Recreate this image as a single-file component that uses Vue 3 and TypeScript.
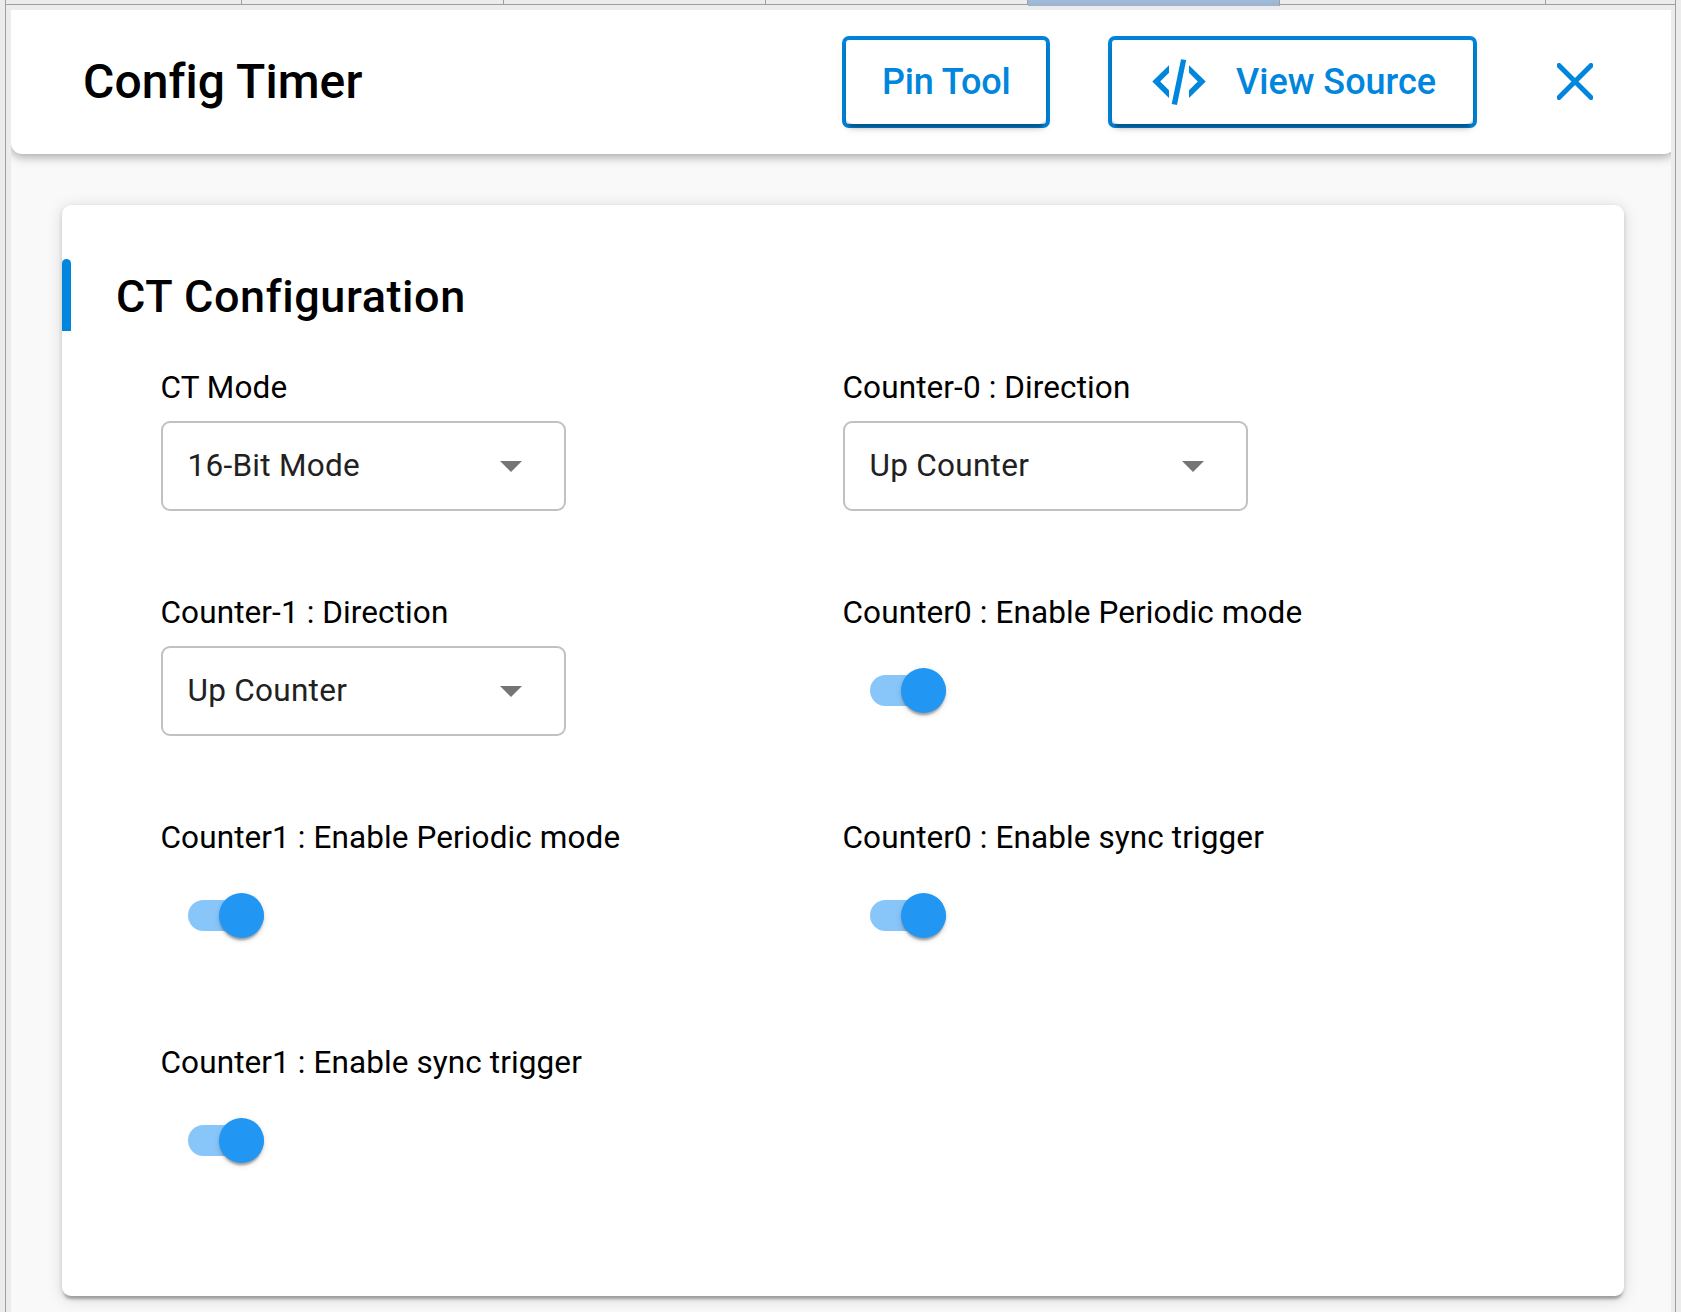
<script setup lang="ts">
import { reactive } from 'vue'

interface SelectField {
  kind: 'select'
  label: string
  value: string
}

interface ToggleField {
  kind: 'toggle'
  label: string
  value: boolean
}

type Field = SelectField | ToggleField

const fields = reactive<Field[]>([
  { kind: 'select', label: 'CT Mode', value: '16-Bit Mode' },
  { kind: 'select', label: 'Counter-0 : Direction', value: 'Up Counter' },
  { kind: 'select', label: 'Counter-1 : Direction', value: 'Up Counter' },
  { kind: 'toggle', label: 'Counter0 : Enable Periodic mode', value: true },
  { kind: 'toggle', label: 'Counter1 : Enable Periodic mode', value: true },
  { kind: 'toggle', label: 'Counter0 : Enable sync trigger', value: true },
  { kind: 'toggle', label: 'Counter1 : Enable sync trigger', value: true },
])
</script>

<template>
  <div class="window">
    <div class="tabs">
      <span class="tab first"></span>
      <span class="tab"></span>
      <span class="tab"></span>
      <span class="tab"></span>
      <span class="tab active"></span>
      <span class="tab wide"></span>
      <span class="tab last"></span>
    </div>
    <div class="frame">
      <div class="panel">
        <header class="header">
          <h1 class="title">Config Timer</h1>
          <div class="outline pin">
            <button class="btn" type="button">Pin Tool</button>
          </div>
          <div class="outline source">
            <button class="btn" type="button">
              <svg class="code" viewBox="0 0 54 46" width="54" height="46" aria-hidden="true">
                <path d="M17 6.2V13.8L8.2 22.5L17 31.2V39L0.3 22.5Z" />
                <path d="M29 0.2L34.2 1.1L25 46L19.7 45.1Z" />
                <path d="M37 6.2V13.8L45.8 22.5L37 31.2V39L53.7 22.5Z" />
              </svg>
              <span>View Source</span>
            </button>
          </div>
          <button class="close" type="button" aria-label="Close">
            <svg viewBox="0 0 36 37" width="36" height="37">
              <path d="M2 2.5L34 34.5M34 2.5L2 34.5" />
            </svg>
          </button>
        </header>

        <section class="card">
          <h2 class="heading">CT Configuration</h2>
          <div class="grid">
            <div v-for="f in fields" :key="f.label" class="field">
              <div class="label">{{ f.label }}</div>
              <div v-if="f.kind === 'select'" class="select">
                <span>{{ f.value }}</span>
                <i class="arrow"></i>
              </div>
              <div v-else class="toggle-box">
                <div class="toggle" :class="{ on: f.value }" @click="f.value = !f.value">
                  <i class="thumb"></i>
                </div>
              </div>
            </div>
          </div>
        </section>
      </div>
    </div>
  </div>
</template>

<style>
body {
  background: #ececec;
  overflow: hidden;
}
</style>

<style scoped>
.window {
  box-sizing: border-box;
  height: 1312px;
  padding-left: 5px;
  padding-right: 5px;
  display: flex;
  flex-direction: column;
  font-family: Roboto, sans-serif;
  color: #000;
}
.tabs {
  display: flex;
  height: 5px;
  border-left: 1px solid #9f9f9f;
  z-index: 1;
}
.tab {
  box-sizing: border-box;
  width: 262px;
  height: 5px;
  border-right: 1px solid #9f9f9f;
  border-bottom: 1px solid #9f9f9f;
}
.tab.first {
  width: 236px;
}
.tab.active {
  width: 252px;
  height: 6px;
  border-bottom: 0;
  background: linear-gradient(#a2bbd6, #9ab3d2);
}
.tab.wide {
  width: 266px;
}
.tab.last {
  width: 130px;
}
.frame {
  box-sizing: border-box;
  width: 1671px;
  flex: 1;
  padding: 5px 4px 0 5px;
  border-left: 1px solid #9f9f9f;
  border-right: 1px solid #9f9f9f;
}
.panel {
  height: 1302px;
  background: #f9f9f9;
  overflow: hidden;
}
.header {
  box-sizing: border-box;
  width: 1664px;
  height: 144px;
  padding: 0 82px 0 72px;
  display: flex;
  align-items: center;
  background: #fff;
  border-radius: 0 0 11px 11px;
  box-shadow: 0 2px 9px rgba(0, 0, 0, 0.2), 0 4px 12px rgba(0, 0, 0, 0.16);
}
.title {
  flex: 1;
  margin: 0;
  font-size: 48px;
  font-weight: 500;
  line-height: 56px;
  letter-spacing: 0.08px;
}
.outline {
  box-sizing: border-box;
  height: 92px;
  border: 4px solid #0086dc;
  border-radius: 7px;
}
.pin {
  width: 208px;
  margin-right: 58px;
}
.source {
  width: 369px;
  margin-right: 80px;
}
.btn {
  width: 100%;
  height: 100%;
  padding: 0 0 0 36px;
  border: 0;
  border-radius: 7px;
  display: flex;
  align-items: center;
  background: #fff;
  color: #0086dc;
  font: 500 36px/42px Roboto, sans-serif;
  letter-spacing: -0.15px;
  white-space: nowrap;
  box-shadow: 0 6.75px 2.25px -4.5px rgba(0, 0, 0, 0.2), 0 4.5px 4.5px rgba(0, 0, 0, 0.14),
    0 2.25px 11.25px rgba(0, 0, 0, 0.12);
}
.source .btn {
  padding-left: 40px;
  gap: 30px;
  letter-spacing: 0;
}
.code {
  fill: #0086dc;
}
.close {
  padding: 0 0 1px;
  border: 0;
  background: none;
  display: flex;
}
.close svg {
  overflow: hidden;
}
.close path {
  fill: none;
  stroke: #0086dc;
  stroke-width: 5;
  stroke-linecap: round;
}
.card {
  box-sizing: border-box;
  width: 1562px;
  height: 1091px;
  margin: 51px 0 0 51px;
  padding-top: 54px;
  background: #fff;
  border-radius: 9px;
  box-shadow: 0 4.5px 2.25px -2.25px rgba(0, 0, 0, 0.2), 0 2.25px 4.5px rgba(0, 0, 0, 0.14),
    0 2.25px 16px rgba(0, 0, 0, 0.14);
}
.heading {
  box-sizing: border-box;
  height: 72px;
  margin: 0;
  padding-top: 3px;
  display: flex;
  align-items: center;
  font-size: 45px;
  font-weight: 500;
  letter-spacing: 0.58px;
  line-height: 52px;
}
.heading::before {
  content: '';
  width: 9px;
  height: 72px;
  margin: -3px 45px 0 0;
  border-radius: 4.5px 4.5px 0 0;
  background: #0086dc;
}
.grid {
  display: grid;
  grid-template-columns: 682px 682px;
  grid-auto-rows: 225px;
  padding: 36px 0 0 99px;
}
.label {
  box-sizing: border-box;
  height: 54px;
  padding-top: 1px;
  line-height: 40px;
  font-size: 31.5px;
  letter-spacing: 0.1px;
  text-indent: -0.5px;
}
.select {
  box-sizing: border-box;
  width: 405px;
  height: 90px;
  padding: 0 42px 2px 24.5px;
  border: 2px solid #c1c1c1;
  border-radius: 9px;
  display: flex;
  align-items: center;
  justify-content: space-between;
  font-size: 31.5px;
  letter-spacing: 0.28px;
  color: #212121;
}
.arrow {
  margin-top: 3px;
  border: 11.25px solid transparent;
  border-top-color: #757575;
  border-bottom: 0;
}
.toggle-box {
  box-sizing: border-box;
  height: 90px;
  padding: 0 0 2px 27px;
  display: flex;
  align-items: center;
}
.toggle {
  width: 76px;
  height: 31px;
  border-radius: 16px;
  background: #bdbdbd;
  display: flex;
  align-items: center;
}
.toggle.on {
  background: #88c6f9;
  justify-content: flex-end;
}
.thumb {
  width: 45px;
  height: 45px;
  border-radius: 50%;
  background: #fafafa;
  box-shadow: 0 4.5px 2.25px -2.25px rgba(0, 0, 0, 0.2), 0 2.25px 2.25px rgba(0, 0, 0, 0.14),
    0 2.25px 6.75px rgba(0, 0, 0, 0.12);
}
.on .thumb {
  background: #2196f3;
}
</style>
